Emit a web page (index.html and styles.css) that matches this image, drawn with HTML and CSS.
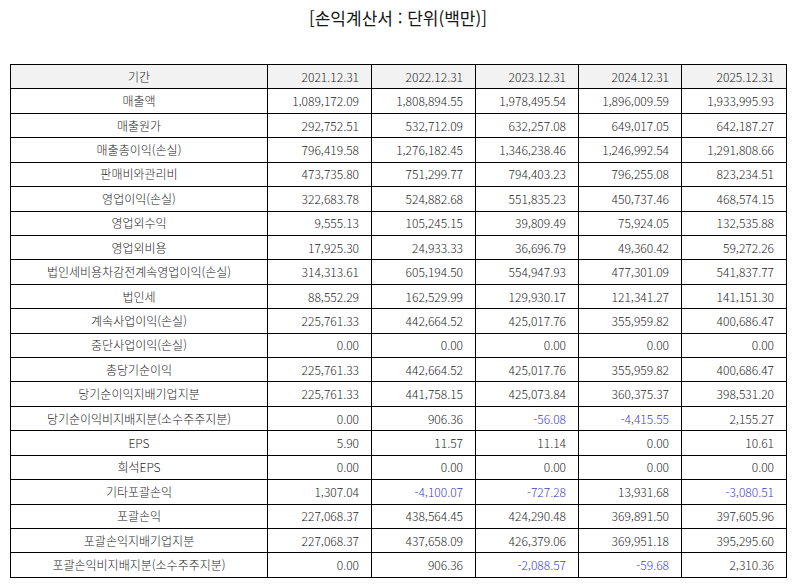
FILE: index.html
```html
<!DOCTYPE html>
<html lang="ko">
<head>
<meta charset="utf-8">
<title>손익계산서</title>
<link rel="stylesheet" href="styles.css">
</head>
<body>
<div class="page">
  <h1 class="title">[손익계산서 : 단위(백만)]</h1>
  <table class="fin">
    <colgroup>
      <col class="c-label"><col class="c-a"><col class="c-a"><col class="c-b"><col class="c-b"><col class="c-c">
    </colgroup>
    <thead>
      <tr><th>기간</th><th>2021.12.31</th><th>2022.12.31</th><th>2023.12.31</th><th>2024.12.31</th><th>2025.12.31</th></tr>
    </thead>
    <tbody>
      <tr><td>매출액</td><td>1,089,172.09</td><td>1,808,894.55</td><td>1,978,495.54</td><td>1,896,009.59</td><td>1,933,995.93</td></tr>
      <tr><td>매출원가</td><td>292,752.51</td><td>532,712.09</td><td>632,257.08</td><td>649,017.05</td><td>642,187.27</td></tr>
      <tr><td>매출총이익(손실)</td><td>796,419.58</td><td>1,276,182.45</td><td>1,346,238.46</td><td>1,246,992.54</td><td>1,291,808.66</td></tr>
      <tr><td>판매비와관리비</td><td>473,735.80</td><td>751,299.77</td><td>794,403.23</td><td>796,255.08</td><td>823,234.51</td></tr>
      <tr><td>영업이익(손실)</td><td>322,683.78</td><td>524,882.68</td><td>551,835.23</td><td>450,737.46</td><td>468,574.15</td></tr>
      <tr><td>영업외수익</td><td>9,555.13</td><td>105,245.15</td><td>39,809.49</td><td>75,924.05</td><td>132,535.88</td></tr>
      <tr><td>영업외비용</td><td>17,925.30</td><td>24,933.33</td><td>36,696.79</td><td>49,360.42</td><td>59,272.26</td></tr>
      <tr><td>법인세비용차감전계속영업이익(손실)</td><td>314,313.61</td><td>605,194.50</td><td>554,947.93</td><td>477,301.09</td><td>541,837.77</td></tr>
      <tr><td>법인세</td><td>88,552.29</td><td>162,529.99</td><td>129,930.17</td><td>121,341.27</td><td>141,151.30</td></tr>
      <tr><td>계속사업이익(손실)</td><td>225,761.33</td><td>442,664.52</td><td>425,017.76</td><td>355,959.82</td><td>400,686.47</td></tr>
      <tr><td>중단사업이익(손실)</td><td>0.00</td><td>0.00</td><td>0.00</td><td>0.00</td><td>0.00</td></tr>
      <tr><td>총당기순이익</td><td>225,761.33</td><td>442,664.52</td><td>425,017.76</td><td>355,959.82</td><td>400,686.47</td></tr>
      <tr><td>당기순이익지배기업지분</td><td>225,761.33</td><td>441,758.15</td><td>425,073.84</td><td>360,375.37</td><td>398,531.20</td></tr>
      <tr><td>당기순이익비지배지분(소수주주지분)</td><td>0.00</td><td>906.36</td><td class="neg">-56.08</td><td class="neg">-4,415.55</td><td>2,155.27</td></tr>
      <tr><td>EPS</td><td>5.90</td><td>11.57</td><td>11.14</td><td>0.00</td><td>10.61</td></tr>
      <tr><td>희석EPS</td><td>0.00</td><td>0.00</td><td>0.00</td><td>0.00</td><td>0.00</td></tr>
      <tr><td>기타포괄손익</td><td>1,307.04</td><td class="neg">-4,100.07</td><td class="neg">-727.28</td><td>13,931.68</td><td class="neg">-3,080.51</td></tr>
      <tr><td>포괄손익</td><td>227,068.37</td><td>438,564.45</td><td>424,290.48</td><td>369,891.50</td><td>397,605.96</td></tr>
      <tr><td>포괄손익지배기업지분</td><td>227,068.37</td><td>437,658.09</td><td>426,379.06</td><td>369,951.18</td><td>395,295.60</td></tr>
      <tr><td>포괄손익비지배지분(소수주주지분)</td><td>0.00</td><td>906.36</td><td class="neg">-2,088.57</td><td class="neg">-59.68</td><td>2,310.36</td></tr>
    </tbody>
  </table>
</div>
</body>
</html>
```

FILE: styles.css
```css
html, body {
  margin: 0;
  padding: 0;
  background: #ffffff;
}
.page {
  padding: 5px 8px 0 10px;
  font-family: "Noto Sans CJK KR", "Noto Sans", sans-serif;
  color: #262626;
}
.title {
  margin: 0;
  height: 59px;
  font-size: 17px;
  font-weight: 400;
  line-height: 26px;
  text-align: center;
  color: #151515;
}
.fin {
  width: 776px;
  border-collapse: collapse;
  table-layout: fixed;
  font-size: 12px;
}
.c-label { width: 257px; }
.c-a { width: 104px; }
.c-b { width: 103px; }
.c-c { width: 105px; }
.fin th, .fin td {
  border: 1px solid #000;
  height: 24.43px;
  padding: 0 12px 0 6px;
  line-height: 14px;
  text-align: right;
  font-weight: 300;
  white-space: nowrap;
  box-sizing: border-box;
}
.fin th {
  background: #f2f2f2;
}
.fin th:first-child, .fin td:first-child {
  text-align: center;
  padding: 0 6px;
}
.fin td.neg {
  color: #3c3cd0;
}
```
